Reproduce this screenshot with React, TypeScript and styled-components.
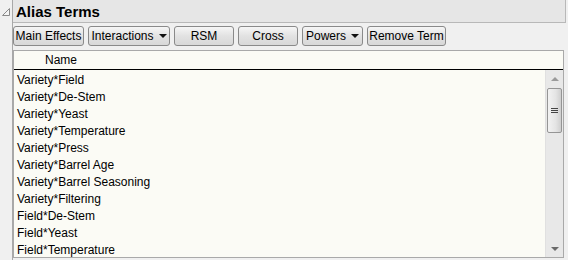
import styled, { createGlobalStyle } from 'styled-components';

const GlobalStyle = createGlobalStyle`
  html, body {
    margin: 0;
    padding: 0;
    background: #f0f0f0;
    font-family: "Liberation Sans", Arial, sans-serif;
  }
`;

const Outline = styled.div`
  display: flex;
  width: 568px;
  height: 260px;
  overflow: hidden;
`;

const Toggle = styled.div`
  width: 13px;
  flex-shrink: 0;
  padding: 3px 0 0 1px;
  border-right: 1px solid #a8a8a8;
  box-sizing: border-box;
`;

const Body = styled.div`
  width: 553px;
  display: flex;
  flex-direction: column;
`;

const TitleBar = styled.div`
  height: 23px;
  box-sizing: border-box;
  background: #e6e6e6;
  border: 1px solid #b8b8b8;
  border-left: none;
  border-top: none;
  padding: 1px 0 0 3px;
  display: flex;
  align-items: center;
  font-size: 15px;
  font-weight: bold;
  color: #000;
`;

const Toolbar = styled.div`
  display: flex;
  gap: 4px;
  padding: 3px 0 0 0;
  height: 20px;
`;

const Button = styled.div<{ $w: number }>`
  width: ${({ $w }) => $w}px;
  height: 20px;
  box-sizing: border-box;
  border: 1px solid #8a8a8a;
  border-radius: 3px;
  background: linear-gradient(#f6f6f6, #e2e2e2 50%, #d8d8d8);
  display: flex;
  align-items: center;
  justify-content: center;
  gap: 5px;
  font-size: 12px;
  color: #000;
`;

const Caret = styled.span`
  width: 0;
  height: 0;
  border-left: 4px solid transparent;
  border-right: 4px solid transparent;
  border-top: 4px solid #111;
`;

const ListBox = styled.div`
  margin-top: 4px;
  width: 551px;
  height: 208px;
  box-sizing: border-box;
  border: 1px solid #a9a9a9;
  background: #fbfbf5;
  display: flex;
  flex-direction: column;
`;

const Header = styled.div`
  height: 18px;
  border-bottom: 1px solid #000;
  font-size: 12px;
  padding-left: 31px;
  display: flex;
  align-items: center;
  flex-shrink: 0;
`;

const Content = styled.div`
  flex: 1;
  display: flex;
  min-height: 0;
`;

const Rows = styled.div`
  flex: 1;
  padding-top: 2px;
  overflow: hidden;
`;

const Row = styled.div`
  height: 17px;
  line-height: 17px;
  padding-left: 3px;
  font-size: 12px;
  color: #000;
  white-space: nowrap;
`;

const ScrollBar = styled.div`
  width: 17px;
  background: #e8e8e8;
  display: flex;
  flex-direction: column;
  align-items: center;
  border-left: 1px solid #e0e0e0;
`;

const Arrow = styled.div<{ $up?: boolean }>`
  height: 17px;
  display: flex;
  align-items: center;
  justify-content: center;
  &::after {
    content: '';
    border-left: 4px solid transparent;
    border-right: 4px solid transparent;
    ${({ $up }) => ($up ? 'border-bottom: 4px solid #9a9a9a;' : 'border-top: 4px solid #6a6a6a;')}
  }
`;

const Track = styled.div`
  flex: 1;
  width: 100%;
  padding-top: 1px;
  display: flex;
  justify-content: center;
`;

const Thumb = styled.div`
  width: 15px;
  height: 45px;
  box-sizing: border-box;
  border: 1px solid #959595;
  border-radius: 2px;
  background: linear-gradient(90deg, #f2f2f2, #e4e4e4 60%, #cfcfcf);
  display: flex;
  flex-direction: column;
  align-items: center;
  justify-content: center;
  gap: 1px;
`;

const Grip = styled.div`
  width: 7px;
  height: 1px;
  background: #444;
`;

const terms = [
  'Variety*Field',
  'Variety*De-Stem',
  'Variety*Yeast',
  'Variety*Temperature',
  'Variety*Press',
  'Variety*Barrel Age',
  'Variety*Barrel Seasoning',
  'Variety*Filtering',
  'Field*De-Stem',
  'Field*Yeast',
  'Field*Temperature',
];

const buttons = [
  { label: 'Main Effects', w: 71 },
  { label: 'Interactions', w: 82, menu: true },
  { label: 'RSM', w: 60 },
  { label: 'Cross', w: 60 },
  { label: 'Powers', w: 61, menu: true },
  { label: 'Remove Term', w: 79 },
];

export default function App() {
  return (
    <>
      <GlobalStyle />
      <Outline>
        <Toggle>
          <svg width="10" height="10" viewBox="0 0 10 10">
            <path d="M8.5 1.5 L8.5 8.5 L1.5 8.5 Z" fill="#f4f4f4" stroke="#8a8a8a" strokeWidth="1" />
          </svg>
        </Toggle>
        <Body>
          <TitleBar>Alias Terms</TitleBar>
          <Toolbar>
            {buttons.map((b) => (
              <Button key={b.label} $w={b.w}>
                {b.label}
                {b.menu && <Caret />}
              </Button>
            ))}
          </Toolbar>
          <ListBox>
            <Header>Name</Header>
            <Content>
              <Rows>
                {terms.map((t) => (
                  <Row key={t}>{t}</Row>
                ))}
              </Rows>
              <ScrollBar>
                <Arrow $up />
                <Track>
                  <Thumb>
                    <Grip />
                    <Grip />
                    <Grip />
                  </Thumb>
                </Track>
                <Arrow />
              </ScrollBar>
            </Content>
          </ListBox>
        </Body>
      </Outline>
    </>
  );
}
